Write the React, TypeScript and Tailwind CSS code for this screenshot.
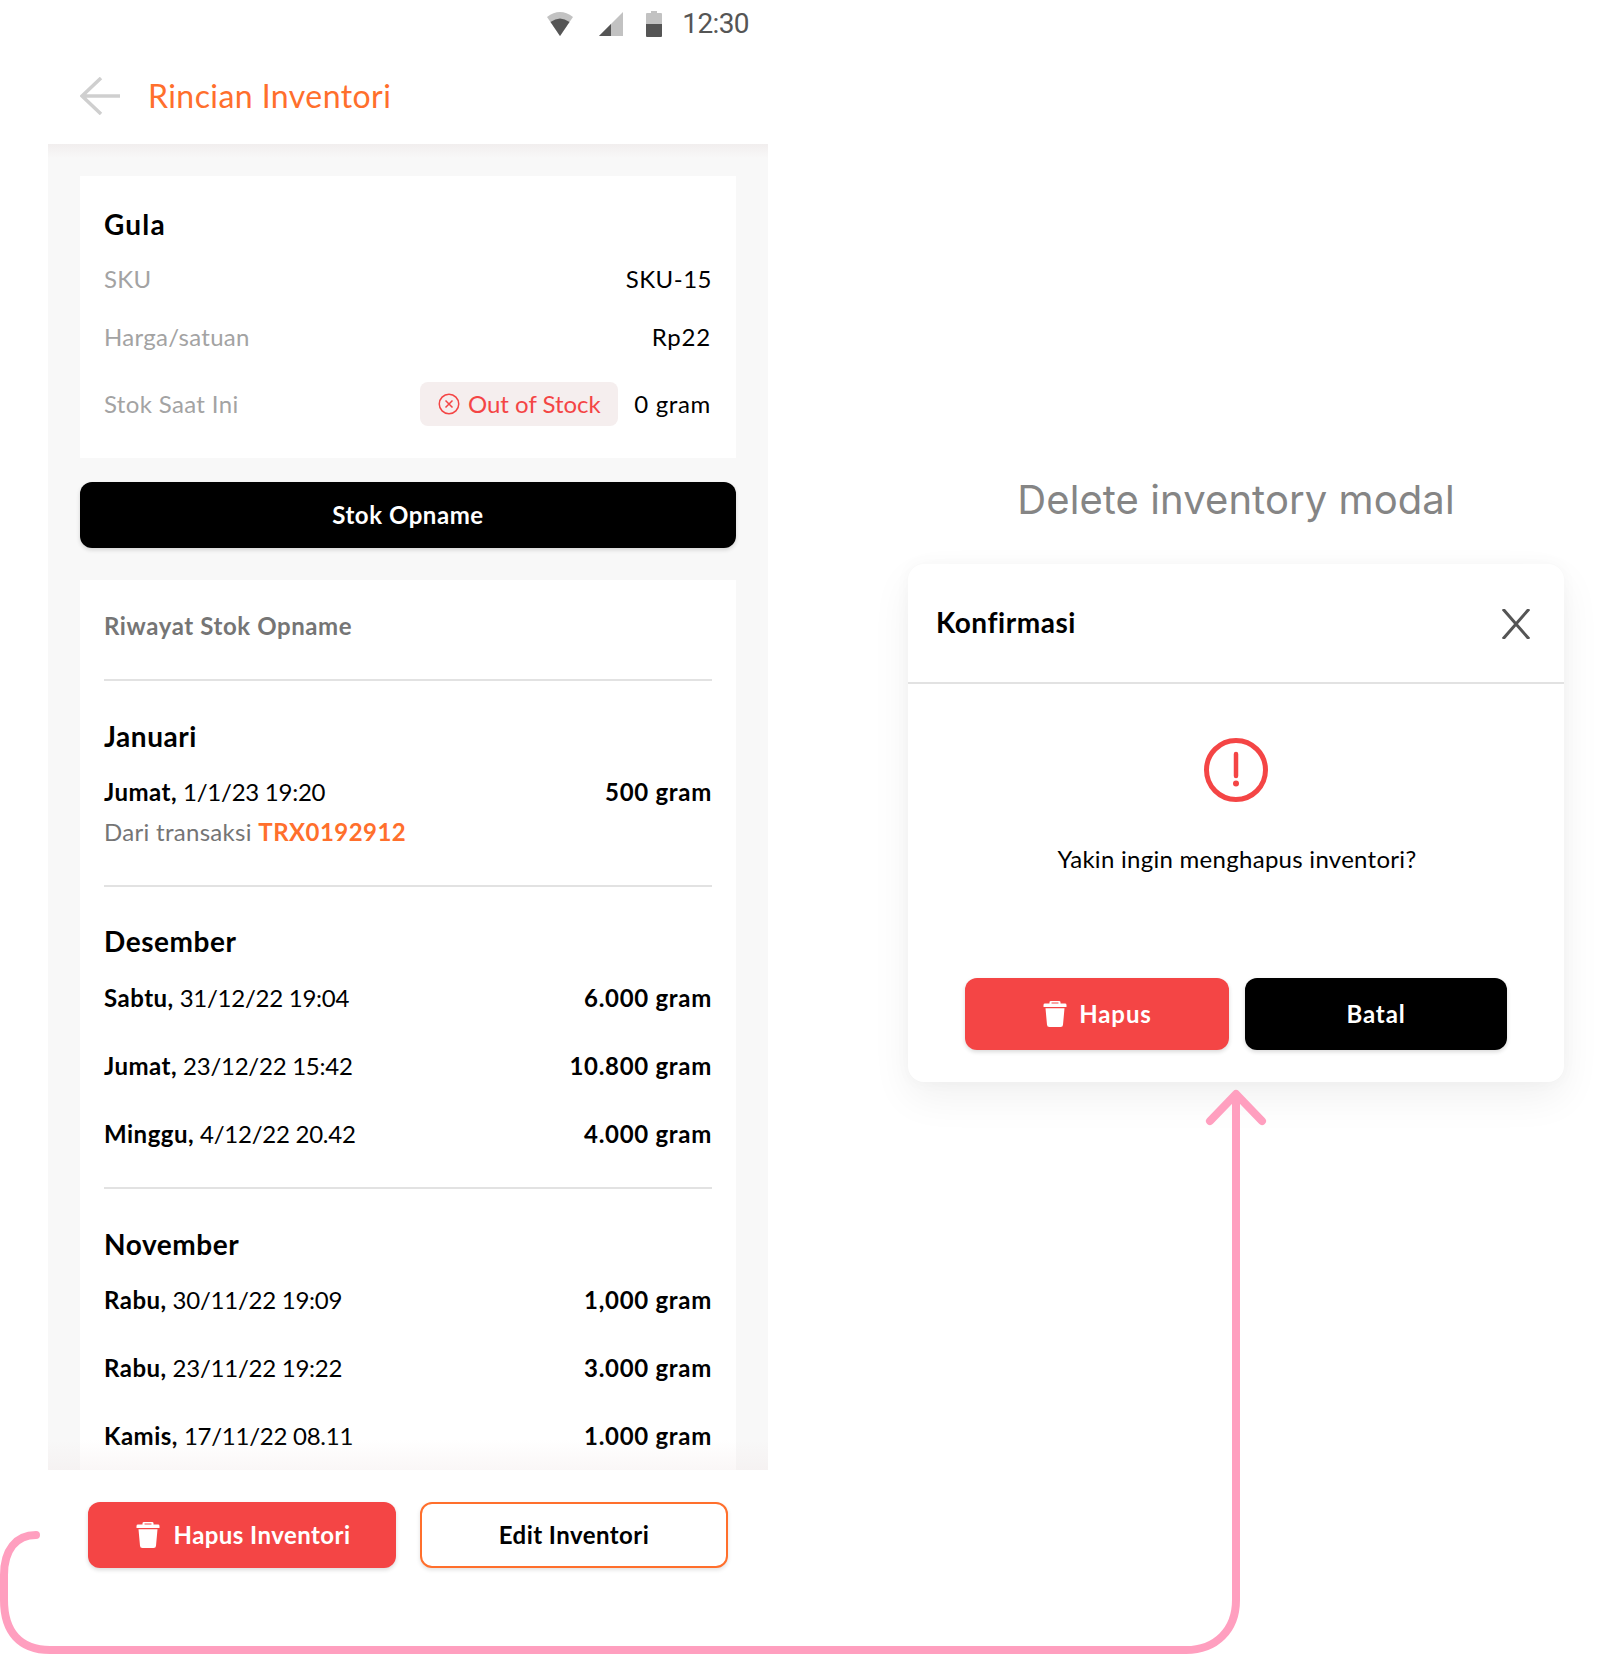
import React from "react";

const Trash = ({ className }: { className: string }) => (
  <svg viewBox="0 0 24 30" preserveAspectRatio="none" className={className} fill="#fff">
    <path d="M8 0h8a1.5 1.5 0 0 1 1.5 1.5V3H22a1.5 1.5 0 0 1 1.5 1.5V7H.5V4.500A1.500 1.500 0 0 1 2 3h4.500V1.500A1.500 1.500 0 0 1 8 0zm.5 1.800V3h7V1.800z" fillRule="evenodd" />
    <path d="M2.500 8.500h19L20 27.500A2.500 2.500 0 0 1 17.500 30h-11A2.500 2.500 0 0 1 4 27.500z" />
  </svg>
);

const Entry = ({ day, date, amount, h }: { day: string; date: string; amount: string; h: string }) => (
  <div className={`flex items-center justify-between ${h} text-[24px] text-black`}>
    <span className="tracking-[-0.25px]">
      <b className="font-bold tracking-[0.5px]">{day},</b> {date}
    </span>
    <b className="font-bold tracking-[0.7px]">{amount}</b>
  </div>
);

const Month = ({ children, className }: { children: string; className: string }) => (
  <div className={`flex items-center text-[28px] font-bold tracking-[0.55px] text-black ${className}`}>{children}</div>
);

const Divider = () => <div className="h-[2px] bg-[#e2e2e2]" />;

export default function App() {
  return (
    <div className="relative flex h-[1654px] w-[1612px] overflow-hidden bg-white font-['Lato','Noto_Sans',sans-serif] tracking-[0.3px]">
      {/* Phone */}
      <div className="ml-[48px] flex w-[720px] flex-col">
        <div className="flex h-[48px] items-center justify-end gap-[23px] pr-[19px]">
          <svg viewBox="0 0 26 24" className="mr-[3px] h-[24px] w-[26px]">
            <path d="M13 24 0 5Q13-5 26 5z" fill="#c2c2c2" />
            <path d="M13 24 3.500 10Q13 3 22.500 10z" fill="#555" />
          </svg>
          <svg viewBox="0 0 24 24" className="h-[24px] w-[24px]">
            <path d="M24 0v24H0z" fill="#c2c2c2" />
            <path d="M12 12v12H0z" fill="#555" />
          </svg>
          <svg viewBox="0 0 16 26" className="h-[26px] w-[16px]">
            <path d="M5 0h6v2h4a1 1 0 0 1 1 1v10H0V3a1 1 0 0 1 1-1h4z" fill="#c2c2c2" />
            <path d="M0 13h16v12a1 1 0 0 1-1 1H1a1 1 0 0 1-1-1z" fill="#555" />
          </svg>
          <span className="-ml-[3px] font-['Roboto',sans-serif] text-[28px] leading-none tracking-[-0.6px] text-[#555]">12:30</span>
        </div>
        <div className="flex h-[96px] items-center pl-[32px]">
          <svg viewBox="0 0 40 38" className="h-[38px] w-[40px]" fill="none" stroke="#cfcfcf" strokeWidth="3.500">
            <path d="M40 19H2M21 1 2 19l19 18" />
          </svg>
          <span className="ml-[28px] text-[32px] leading-none tracking-[0.43px] text-[#ff6f2c]">Rincian Inventori</span>
        </div>
        <div className="relative flex min-h-0 flex-1 flex-col overflow-hidden bg-[#f8f8f8] bg-[linear-gradient(#f1eeee,#f8f8f8_14px)] px-[32px] pt-[32px]">
          <div className="flex h-[282px] shrink-0 flex-col bg-white px-[24px] pt-[31px]">
            <div className="flex h-[34px] items-center text-[28px] font-bold tracking-[1.2px] text-black">Gula</div>
            <div className="mt-[9px] flex h-[58px] items-center justify-between text-[24px]">
              <span className="text-[#a3a3a3]">SKU</span>
              <span className="tracking-[0.5px] text-black">SKU-15</span>
            </div>
            <div className="flex h-[58px] items-center justify-between text-[24px]">
              <span className="text-[#a3a3a3]">Harga/satuan</span>
              <span className="mr-[1px] tracking-[0.8px] text-black">Rp22</span>
            </div>
            <div className="mt-[16px] flex h-[44px] items-center text-[24px]">
              <span className="tracking-[0.35px] text-[#a3a3a3]">Stok Saat Ini</span>
              <span className="ml-auto flex h-[44px] w-[198px] items-center justify-center gap-[8px] rounded-[8px] bg-[#f5eeee] tracking-normal text-[#f44545]">
                <svg viewBox="0 0 22 22" className="h-[22px] w-[22px]" fill="none" stroke="#f44545" strokeWidth="1.500">
                  <circle cx="11" cy="11" r="9.750" />
                  <path d="m7.500 7.500 7 7m0-7-7 7" />
                </svg>
                Out of Stock
              </span>
              <span className="ml-[16px] mr-[1px] tracking-[0.65px] text-black">0 gram</span>
            </div>
          </div>
          <button className="mt-[24px] h-[66px] shrink-0 rounded-[12px] bg-black text-[24px] font-bold tracking-[0.55px] text-white shadow-[0_2px_4px_rgba(0,0,0,0.15)]">
            Stok Opname
          </button>
          <div className="mt-[32px] flex flex-1 flex-col overflow-hidden bg-white px-[24px]">
            <div className="flex h-[99px] shrink-0 items-center pb-[7px] text-[24px] font-bold tracking-[0.6px] text-[#757575]">Riwayat Stok Opname</div>
            <Divider />
            <Month className="mt-[38px] h-[34px] shrink-0">Januari</Month>
            <Entry h="h-[34px] mt-[22px] shrink-0" day="Jumat" date="1/1/23 19:20" amount="500 gram" />
            <div className="mt-[6px] flex h-[34px] shrink-0 items-center text-[24px] text-[#757575]">
              Dari transaksi&nbsp;<b className="font-bold tracking-[0.45px] text-[#ff6f2c]">TRX0192912</b>
            </div>
            <div className="mt-[36px] shrink-0"><Divider /></div>
            <Month className="mt-[37px] h-[34px] shrink-0">Desember</Month>
            <Entry h="h-[34px] mt-[23px] shrink-0" day="Sabtu" date="31/12/22 19:04" amount="6.000 gram" />
            <Entry h="h-[34px] mt-[34px] shrink-0" day="Jumat" date="23/12/22 15:42" amount="10.800 gram" />
            <Entry h="h-[34px] mt-[34px] shrink-0" day="Minggu" date="4/12/22 20.42" amount="4.000 gram" />
            <div className="mt-[36px] shrink-0"><Divider /></div>
            <Month className="mt-[38px] h-[34px] shrink-0">November</Month>
            <Entry h="h-[34px] mt-[22px] shrink-0" day="Rabu" date="30/11/22 19:09" amount="1,000 gram" />
            <Entry h="h-[34px] mt-[34px] shrink-0" day="Rabu" date="23/11/22 19:22" amount="3.000 gram" />
            <Entry h="h-[34px] mt-[34px] shrink-0" day="Kamis" date="17/11/22 08.11" amount="1.000 gram" />
          </div>
          <div className="pointer-events-none absolute inset-x-0 bottom-0 h-[30px] bg-[linear-gradient(rgba(240,228,228,0),rgba(240,228,228,0.3))]" />
        </div>
        <div className="flex h-[184px] shrink-0 items-start gap-[24px] pl-[40px] pt-[32px]">
          <button className="flex h-[66px] w-[308px] items-center justify-center gap-[14px] rounded-[12px] bg-[#f44545] pl-[2px] text-[24px] font-bold tracking-[0.45px] text-white shadow-[0_2px_4px_rgba(0,0,0,0.15)]">
            <Trash className="h-[26px] w-[24px]" />
            Hapus Inventori
          </button>
          <button className="h-[66px] w-[308px] rounded-[12px] border-2 border-[#ff6f2c] bg-white text-[24px] font-bold tracking-[0.45px] text-black shadow-[0_2px_4px_rgba(0,0,0,0.12)]">
            Edit Inventori
          </button>
        </div>
      </div>

      {/* Modal column */}
      <div className="ml-[140px] flex w-[656px] flex-col">
        <div className="mt-[474px] flex h-[52px] items-center justify-center font-['Inter',sans-serif] text-[40px] leading-none tracking-[0.08px] text-[#858585]">
          Delete inventory modal
        </div>
        <div className="mt-[38px] flex h-[518px] flex-col rounded-[16px] bg-white shadow-[0_16px_40px_rgba(0,0,0,0.06),0_0_16px_rgba(0,0,0,0.03)]">
          <div className="flex h-[118px] items-center justify-between pb-[2px] pl-[28px] pr-[34px] text-[28px] font-bold tracking-[0.55px] text-black">
            Konfirmasi
            <svg viewBox="0 0 28 30" className="mt-[4px] h-[30px] w-[28px]" fill="none" stroke="#555" strokeWidth="3">
              <path d="m1 0 26 30M27 0 1 30" />
            </svg>
          </div>
          <div className="h-[2px] bg-[#e2e2e2]" />
          <div className="flex flex-col items-center pt-[54px]">
            <svg viewBox="0 0 64 64" className="h-[64px] w-[64px]" fill="none" stroke="#f44545" strokeWidth="5">
              <circle cx="32" cy="32" r="29.500" />
              <path d="M32 16v22" strokeWidth="4.500" strokeLinecap="round" />
              <circle cx="32" cy="45.500" r="3" fill="#f44545" stroke="none" />
            </svg>
            <div className="mt-[40px] flex h-[34px] items-center pl-[2px] text-[24px] tracking-[0.28px] text-black">Yakin ingin menghapus inventori?</div>
          </div>
          <div className="mt-[102px] flex gap-[16px] px-[57px]">
            <button className="flex h-[72px] w-[264px] items-center justify-center gap-[12px] rounded-[12px] bg-[#f44545] pl-[1px] text-[24px] font-bold tracking-[0.9px] text-white shadow-[0_2px_4px_rgba(0,0,0,0.15)]">
              <Trash className="h-[26px] w-[24px]" />
              Hapus
            </button>
            <button className="h-[72px] w-[262px] rounded-[12px] bg-black text-[24px] font-bold tracking-[0.9px] text-white shadow-[0_2px_4px_rgba(0,0,0,0.15)]">
              Batal
            </button>
          </div>
        </div>
      </div>

      {/* Connector arrow */}
      <svg className="pointer-events-none absolute left-0 top-0 h-[1654px] w-[1612px]" viewBox="0 0 1612 1654" fill="none" stroke="#ff9fbf" strokeWidth="8" strokeLinecap="round" strokeLinejoin="round">
        <path d="M36 1535C16 1535 4 1550 4 1575V1600C4 1632 20 1650 50 1650H1186C1216 1650 1236 1630 1236 1600V1096" />
        <path d="M1210 1121 1236 1094 1262 1121" />
      </svg>
    </div>
  );
}
